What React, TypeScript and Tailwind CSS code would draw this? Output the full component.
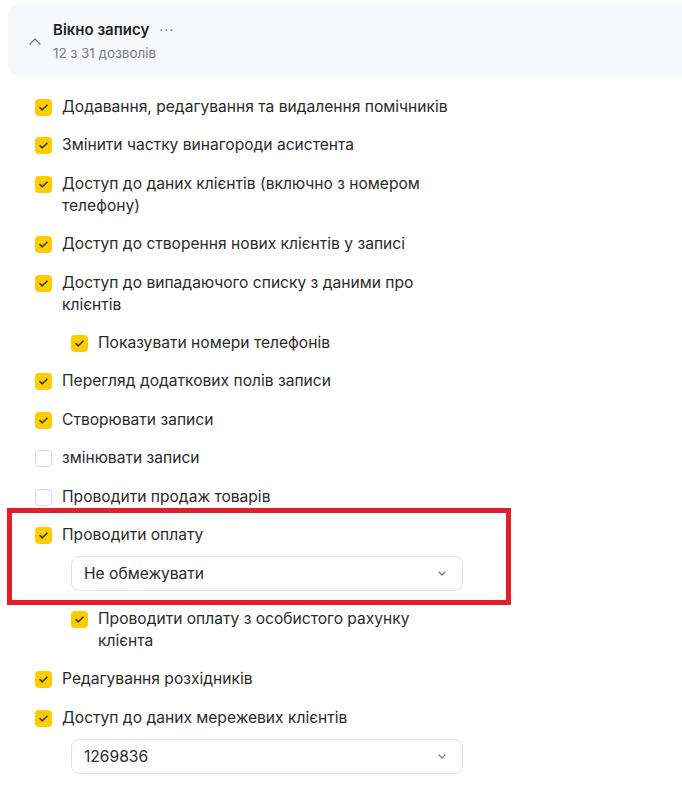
import React from "react";

type Perm = {
  label: string;
  checked: boolean;
  nested?: boolean;
  select?: string;
};

const perms: Perm[] = [
  { label: "Додавання, редагування та видалення помічників", checked: true },
  { label: "Змінити частку винагороди асистента", checked: true },
  { label: "Доступ до даних клієнтів (включно з номером телефону)", checked: true },
  { label: "Доступ до створення нових клієнтів у записі", checked: true },
  { label: "Доступ до випадаючого списку з даними про клієнтів", checked: true },
  { label: "Показувати номери телефонів", checked: true, nested: true },
  { label: "Перегляд додаткових полів записи", checked: true },
  { label: "Створювати записи", checked: true },
  { label: "змінювати записи", checked: false },
  { label: "Проводити продаж товарів", checked: false },
  { label: "Проводити оплату", checked: true, select: "Не обмежувати" },
  { label: "Проводити оплату з особистого рахунку клієнта", checked: true, nested: true },
  { label: "Редагування розхідників", checked: true },
  { label: "Доступ до даних мережевих клієнтів", checked: true, select: "1269836" },
];

function Checkbox({ checked }: { checked: boolean }) {
  if (!checked) {
    return (
      <span className="mt-[3px] h-[17px] w-[17px] shrink-0 rounded-[4px] border border-[#d9dbe4] bg-white" />
    );
  }
  return (
    <span className="mt-[3px] flex h-[17px] w-[17px] shrink-0 items-center justify-center rounded-[4px] bg-[#ffcc00]">
      <svg width="9" height="7" viewBox="0 0 9 7" fill="none">
        <path d="M1 3.6 3.3 5.8 8 1.2" stroke="#3a3a3a" strokeWidth="1.6" strokeLinecap="round" strokeLinejoin="round" />
      </svg>
    </span>
  );
}

function Select({ value }: { value: string }) {
  return (
    <div className="ml-[36px] mt-[10.5px] flex h-[35px] w-[392px] items-center justify-between rounded-[8px] border border-[#e1e1ec] bg-white pl-[12px] pr-[16px] text-[15.6px] text-[#2b2b2b]">
      <span>{value}</span>
      <svg width="8" height="5" viewBox="0 0 8 5" fill="none">
        <path d="M1 1 4 4 7 1" stroke="#777a88" strokeWidth="1.2" strokeLinecap="round" strokeLinejoin="round" />
      </svg>
    </div>
  );
}

export default function App() {
  return (
    <div
      className="relative min-h-[790px] w-[682px] overflow-hidden bg-white pt-[4px] pl-[8px]"
      style={{ fontFamily: "Inter, 'Noto Sans', sans-serif" }}
    >
      {/* Header */}
      <div className="flex h-[72px] items-center rounded-l-[12px] bg-[#f7f8fc] pl-[21px]">
        <svg width="12" height="7" viewBox="0 0 12 7" fill="none" className="mt-[3px]">
          <path d="M1 6 6 1 11 6" stroke="#6f7280" strokeWidth="1.2" strokeLinecap="round" strokeLinejoin="round" />
        </svg>
        <div className="ml-[12px] flex flex-col">
          <div className="flex items-center gap-[10px]">
            <span className="text-[15px] font-semibold leading-[22px] text-[#222]">Вікно запису</span>
            <span className="text-[14px] leading-[22px] tracking-[1px] text-[#777]">···</span>
          </div>
          <span className="mt-[3px] text-[13.5px] leading-[18px] text-[#7a7c86]">12 з 31 дозволів</span>
        </div>
      </div>

      {/* List */}
      <div className="mt-[20px] flex flex-col gap-[16.4px] pl-[27px]">
        {perms.map((p, i) => (
          <div key={i} className={p.nested ? "pl-[36px]" : ""}>
            <div className="flex items-start gap-[10px]" style={{ width: p.nested ? 391 : 427 }}>
              <Checkbox checked={p.checked} />
              <span className="text-[15.6px] leading-[22px] text-[#2b2b2b]">{p.label}</span>
            </div>
            {p.select && <Select value={p.select} />}
          </div>
        ))}
      </div>

      {/* Annotation */}
      <div className="pointer-events-none absolute left-[7px] top-[508px] h-[97px] w-[504px] border-[5px] border-[#e21f26]" />
    </div>
  );
}
